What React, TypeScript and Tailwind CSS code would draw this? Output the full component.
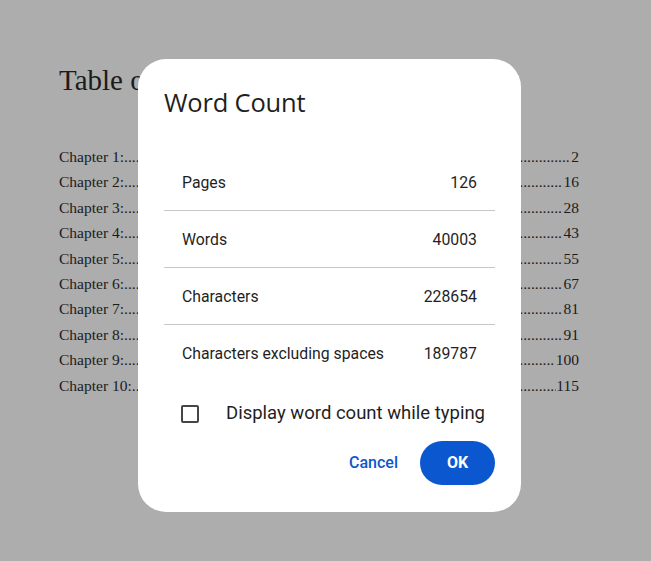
import * as React from 'react'

// dots: leader length fitted to the 520px text column
const chapters = [
  { n: 1, page: 2, dots: 115 },
  { n: 2, page: 16, dots: 113 },
  { n: 3, page: 28, dots: 113 },
  { n: 4, page: 43, dots: 113 },
  { n: 5, page: 55, dots: 113 },
  { n: 6, page: 67, dots: 113 },
  { n: 7, page: 81, dots: 113 },
  { n: 8, page: 91, dots: 113 },
  { n: 9, page: 100, dots: 111 },
  { n: 10, page: 115, dots: 110 },
]

const stats = [
  { label: 'Pages', value: '126' },
  { label: 'Words', value: '40003' },
  { label: 'Characters', value: '228654' },
  { label: 'Characters excluding spaces', value: '189787' },
]

export default function App() {
  return (
    <div className="relative w-[651px] h-[561px] overflow-hidden bg-[#adadad]">
      {/* dimmed document behind the dialog */}
      <div className="pl-[59px] pr-[72px] pt-[62px] text-[#1b1b1b] font-['Liberation_Serif',serif]">
        <h1 className="text-[29px] leading-[36px]">Table of Contents</h1>
        <div className="mt-[46px] flex flex-col">
          {chapters.map(c => (
            <div key={c.n} className="flex items-baseline h-[25.4px] text-[15.5px] leading-[25px] whitespace-nowrap">
              <span className="shrink-0">Chapter {c.n}:</span>
              <span className="flex-1 min-w-0 overflow-hidden">{'.'.repeat(c.dots)}</span>
              <span className="shrink-0">{c.page}</span>
            </div>
          ))}
        </div>
      </div>

      {/* Word count dialog */}
      <div className="absolute left-[138px] top-[59px] w-[383px] h-[453px] bg-white rounded-[28px] px-[26px] pt-[24px] pb-[26px] flex flex-col font-['Roboto',sans-serif] text-[#1f1f1f]">
        <h2 className="text-[25.5px] leading-[38px] font-['Open_Sans',sans-serif] tracking-[-0.2px]">Word Count</h2>
        <div className="mt-[33px] flex flex-col">
          {stats.map((s, i) => (
            <div
              key={s.label}
              className={
                i < stats.length - 1
                  ? 'flex items-center justify-between h-[57px] pt-[1px] px-[18px] border-b border-[#c7c7c7] text-[15.8px]'
                  : 'flex items-center justify-between h-[56px] pt-[1px] px-[18px] text-[15.8px]'
              }
            >
              <span>{s.label}</span>
              <span>{s.value}</span>
            </div>
          ))}
        </div>
        <label className="mt-[9px] h-[48px] flex items-center pl-[17px]">
          <span className="w-[18px] h-[18px] rounded-[2px] border-2 border-[#444746] shrink-0" />
          <span className="ml-[27px] text-[18.5px] text-[#1f1f1f]">Display word count while typing</span>
        </label>
        <div className="mt-[3px] flex items-center justify-end gap-[22px]">
          <button className="text-[16px] font-medium text-[#0b57d0] px-0">Cancel</button>
          <button className="w-[75px] h-[44px] rounded-full bg-[#0b57d0] text-white text-[16px] font-bold">OK</button>
        </div>
      </div>
    </div>
  )
}
